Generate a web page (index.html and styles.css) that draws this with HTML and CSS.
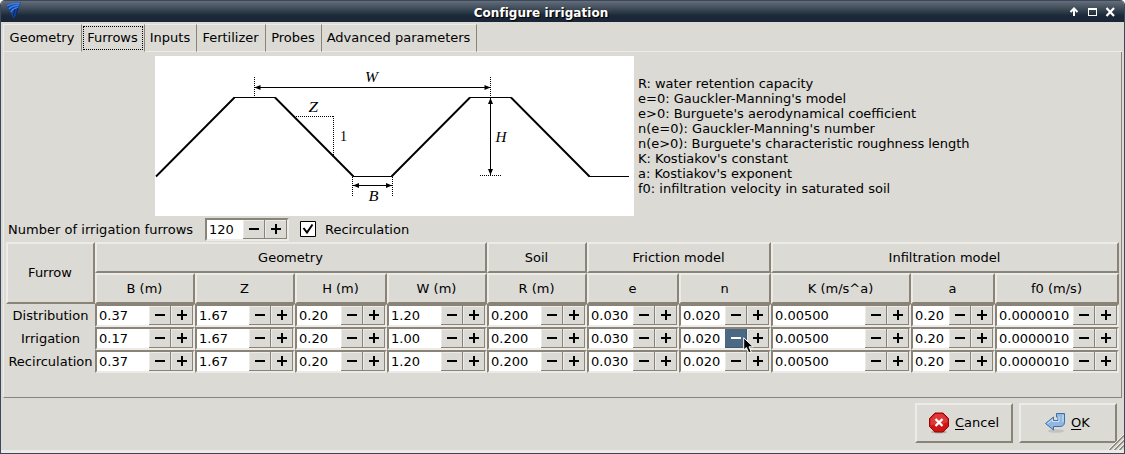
FILE: index.html
```html
<!DOCTYPE html>
<html lang="en">
<head>
<meta charset="utf-8">
<title>Configure irrigation</title>
<link rel="stylesheet" href="styles.css">
</head>
<body>
<svg class="defs" width="0" height="0">
  <symbol id="minus" viewBox="0 0 22 19"><path d="M6 8h10v2H6z"/></symbol>
  <symbol id="plus" viewBox="0 0 22 19"><path d="M6 8h10v2H6zM10 4h2v10h-2z"/></symbol>
</svg>
<div class="window">
  <header class="titlebar">
    <svg class="app-icon" width="17" height="18" viewBox="0 0 17 18">
      <path d="M0 3 6 1 15 0 12 7 10 13 8 16 6 15 5 11 2 7z" fill="#16459a"/>
      <path d="M1 4C5 1 10 2 14 1M3 7C6 3 10 4 13 3M5 10C7 6 9 7 12 5" stroke="#3f7fe6" stroke-width="1.5" fill="none"/>
      <path d="M7 15 9 7M10 13 12 6" stroke="#0b2461" fill="none"/>
    </svg>
    <h1 class="title">Configure irrigation</h1>
    <svg class="controls" width="48" height="14" viewBox="0 0 48 14">
      <path d="M6 11V4M2.500 7 6 3.500 9.500 7" stroke="#fff" stroke-width="2" fill="none"/>
      <path d="M20 3h9v8h-9zM21 5v5h7V5z" fill="#fff" fill-rule="evenodd"/>
      <path d="M38.500 3 46 11M46 3 38.500 11" stroke="#fff" stroke-width="2.200"/>
    </svg>
  </header>
  <nav class="tabs">
    <span class="tab t1">Geometry</span><span class="tab t2 active"><span class="focus">Furrows</span></span><span class="tab t3">Inputs</span><span class="tab t4">Fertilizer</span><span class="tab t5">Probes</span><span class="tab t6">Advanced parameters</span><span class="tab-rest"></span>
  </nav>
  <main class="pane">
    <section class="intro">
      <svg class="diagram" width="479" height="160" viewBox="155 56 479 160">
        <g stroke="#000" fill="none">
          <path stroke-width="1.900" d="M156 176.500 234.500 97.500M275 97.500 353.500 176.500M391.500 176.500 470 97.500M511 97.500 589.500 176.500"/>
          <path d="M234 97.500H275M353 176.500H392M470 97.500H511M589 176.500H629M255 87.500H490M353 185.500H392M490.500 98V175"/>
          <path stroke-dasharray="1 1" d="M254.500 77V97M490.500 77V97M480 175.500H502M294 116.500H334M333.500 116V156M352.500 177V196M392.500 177V196"/>
        </g>
        <path d="M254.500 87.500l6-2.500v5zM490.500 87.500l-6-2.500v5zM353 185.500l6-2.500v5zM392 185.500l-6-2.500v5zM490.500 98l-2.500 6h5zM490.500 175l-2.500-6h5z"/>
        <g class="math">
          <text x="365" y="82" textLength="13" lengthAdjust="spacingAndGlyphs">W</text>
          <text x="308.500" y="112" textLength="9.500" lengthAdjust="spacingAndGlyphs">Z</text>
          <text x="495.500" y="142" textLength="11" lengthAdjust="spacingAndGlyphs">H</text>
          <text x="368.500" y="201" textLength="10" lengthAdjust="spacingAndGlyphs">B</text>
          <text x="340" y="141" class="upright">1</text>
        </g>
      </svg>
      <div class="legend">
        <p class="snug">R: water retention capacity</p>
        <p>e=0: Gauckler-Manning's model</p>
        <p>e&gt;0: Burguete's aerodynamical coefficient</p>
        <p>n(e=0): Gauckler-Manning's number</p>
        <p class="snug">n(e&gt;0): Burguete's characteristic roughness length</p>
        <p>K: Kostiakov's constant</p>
        <p>a: Kostiakov's exponent</p>
        <p>f0: infiltration velocity in saturated soil</p>
      </div>
    </section>
    <section class="count">
      <span class="count-label">Number of irrigation furrows</span>
      <div class="spin count-spin"><span class="val">120</span><svg class="btn"><use href="#minus"/></svg><svg class="btn"><use href="#plus"/></svg></div>
      <svg class="check" width="16" height="16" viewBox="0 0 16 16"><path d="M.5.5h15v15H.5z" fill="#fff" stroke="#000"/><path d="M3.500 7 7 11.500 12.500 3.500" fill="none" stroke="#000" stroke-width="2"/></svg>
      <span>Recirculation</span>
    </section>
    <section class="grid">
      <div class="head furrow">Furrow</div>
      <div class="head span4">Geometry</div><div class="head">Soil</div><div class="head span2">Friction model</div><div class="head span3">Infiltration model</div>
      <div class="head">B (m)</div><div class="head">Z</div><div class="head">H (m)</div><div class="head">W (m)</div><div class="head">R (m)</div><div class="head">e</div><div class="head">n</div><div class="head">K (m/s^a)</div><div class="head">a</div><div class="head">f0 (m/s)</div>

      <div class="name">Distribution</div>
      <div class="spin"><span class="val">0.37</span><svg class="btn"><use href="#minus"/></svg><svg class="btn"><use href="#plus"/></svg></div>
      <div class="spin"><span class="val">1.67</span><svg class="btn"><use href="#minus"/></svg><svg class="btn"><use href="#plus"/></svg></div>
      <div class="spin"><span class="val">0.20</span><svg class="btn"><use href="#minus"/></svg><svg class="btn"><use href="#plus"/></svg></div>
      <div class="spin"><span class="val">1.20</span><svg class="btn"><use href="#minus"/></svg><svg class="btn"><use href="#plus"/></svg></div>
      <div class="spin"><span class="val">0.200</span><svg class="btn"><use href="#minus"/></svg><svg class="btn"><use href="#plus"/></svg></div>
      <div class="spin"><span class="val">0.030</span><svg class="btn"><use href="#minus"/></svg><svg class="btn"><use href="#plus"/></svg></div>
      <div class="spin"><span class="val">0.020</span><svg class="btn"><use href="#minus"/></svg><svg class="btn"><use href="#plus"/></svg></div>
      <div class="spin"><span class="val">0.00500</span><svg class="btn"><use href="#minus"/></svg><svg class="btn"><use href="#plus"/></svg></div>
      <div class="spin"><span class="val">0.20</span><svg class="btn"><use href="#minus"/></svg><svg class="btn"><use href="#plus"/></svg></div>
      <div class="spin"><span class="val">0.0000010</span><svg class="btn"><use href="#minus"/></svg><svg class="btn"><use href="#plus"/></svg></div>

      <div class="name">Irrigation</div>
      <div class="spin"><span class="val">0.17</span><svg class="btn"><use href="#minus"/></svg><svg class="btn"><use href="#plus"/></svg></div>
      <div class="spin"><span class="val">1.67</span><svg class="btn"><use href="#minus"/></svg><svg class="btn"><use href="#plus"/></svg></div>
      <div class="spin"><span class="val">0.20</span><svg class="btn"><use href="#minus"/></svg><svg class="btn"><use href="#plus"/></svg></div>
      <div class="spin"><span class="val">1.00</span><svg class="btn"><use href="#minus"/></svg><svg class="btn"><use href="#plus"/></svg></div>
      <div class="spin"><span class="val">0.200</span><svg class="btn"><use href="#minus"/></svg><svg class="btn"><use href="#plus"/></svg></div>
      <div class="spin"><span class="val">0.030</span><svg class="btn"><use href="#minus"/></svg><svg class="btn"><use href="#plus"/></svg></div>
      <div class="spin"><span class="val">0.020</span><svg class="btn hover"><use href="#minus"/></svg><svg class="btn"><use href="#plus"/></svg>
        <svg class="cursor" width="12" height="18" viewBox="0 0 12 18"><path d="M.7.8V13l2.700-2.500 2.300 5.300 2.500-1-2.200-5h4.200z" stroke="#fff" stroke-width="1"/></svg></div>
      <div class="spin"><span class="val">0.00500</span><svg class="btn"><use href="#minus"/></svg><svg class="btn"><use href="#plus"/></svg></div>
      <div class="spin"><span class="val">0.20</span><svg class="btn"><use href="#minus"/></svg><svg class="btn"><use href="#plus"/></svg></div>
      <div class="spin"><span class="val">0.0000010</span><svg class="btn"><use href="#minus"/></svg><svg class="btn"><use href="#plus"/></svg></div>

      <div class="name">Recirculation</div>
      <div class="spin"><span class="val">0.37</span><svg class="btn"><use href="#minus"/></svg><svg class="btn"><use href="#plus"/></svg></div>
      <div class="spin"><span class="val">1.67</span><svg class="btn"><use href="#minus"/></svg><svg class="btn"><use href="#plus"/></svg></div>
      <div class="spin"><span class="val">0.20</span><svg class="btn"><use href="#minus"/></svg><svg class="btn"><use href="#plus"/></svg></div>
      <div class="spin"><span class="val">1.20</span><svg class="btn"><use href="#minus"/></svg><svg class="btn"><use href="#plus"/></svg></div>
      <div class="spin"><span class="val">0.200</span><svg class="btn"><use href="#minus"/></svg><svg class="btn"><use href="#plus"/></svg></div>
      <div class="spin"><span class="val">0.030</span><svg class="btn"><use href="#minus"/></svg><svg class="btn"><use href="#plus"/></svg></div>
      <div class="spin"><span class="val">0.020</span><svg class="btn"><use href="#minus"/></svg><svg class="btn"><use href="#plus"/></svg></div>
      <div class="spin"><span class="val">0.00500</span><svg class="btn"><use href="#minus"/></svg><svg class="btn"><use href="#plus"/></svg></div>
      <div class="spin"><span class="val">0.20</span><svg class="btn"><use href="#minus"/></svg><svg class="btn"><use href="#plus"/></svg></div>
      <div class="spin"><span class="val">0.0000010</span><svg class="btn"><use href="#minus"/></svg><svg class="btn"><use href="#plus"/></svg></div>
    </section>
  </main>
  <footer class="actions">
    <div class="action">
      <svg width="22" height="22" viewBox="0 0 22 22">
        <ellipse cx="11" cy="20" rx="8" ry="1.500" fill="#a9a8a3"/>
        <path d="M7 1h8l5.500 5.500v8L15 20H7L1.500 14.500v-8z" fill="#cc1515" stroke="#a00000"/>
        <path d="M7.400 2h7.200l4.900 4.900v3.600c-5 2-12 1-17 3V6.900z" fill="#e65050" opacity=".6"/>
        <path d="M7.500 7 14.500 14M14.500 7 7.500 14" stroke="#fff" stroke-width="2.400"/>
      </svg>
      <span class="cancel-text"><u>C</u>ancel</span>
    </div>
    <div class="action">
      <svg width="22" height="22" viewBox="0 0 22 22">
        <ellipse cx="12" cy="19" rx="8" ry="1.800" fill="#c3c2be"/>
        <path d="M1.500 11.500 9.500 5v3.500h4.500V6.500c0-1-.5-1.500-1.500-1.500V1.500h8v9c0 2.500-2 4-4.500 4H9.500V18z" fill="#8fb7e3" stroke="#3f6ea5"/>
        <path d="M3.500 11.500 8.500 7.500v2h6.500V4.500M19 3v7" fill="none" stroke="#d3e4f6"/>
      </svg>
      <span class="ok-text"><u>O</u>K</span>
    </div>
  </footer>
  <svg class="grip" width="16" height="16" viewBox="0 0 16 16"><path d="M1.500 16 16 1.500M6.500 16 16 6.500M11.500 16 16 11.500" stroke="#8a8478" stroke-width="1.500"/><path d="M0 16 16 0M5 16 16 5M10 16 16 10" stroke="#f2f0ed"/></svg>
</div>
</body>
</html>
```
FILE: styles.css
```css
* { box-sizing: border-box; }
body {
  margin: 0;
  background: #fff;
  font: 13px/15px "DejaVu Sans", sans-serif;
  color: #000;
}
.defs { position: absolute; }
.window {
  position: relative;
  display: flex;
  flex-direction: column;
  width: 1125px;
  height: 454px;
  border: 1px solid #3a475c;
  border-top: 0;
  border-radius: 5px 5px 0 0;
  background: #dbdad5;
  box-shadow: inset 0 -3px #edebe7;
  overflow: hidden;
}
.titlebar {
  display: flex;
  align-items: center;
  height: 22px;
  padding: 0 8px 0 5px;
  border-top: 1px solid #3a475c;
  background: linear-gradient(#656e7a, #354250 45%, #1b2838 70%, #1a2637);
}
.app-icon { flex: none; margin-top: -1px; }
.title {
  flex: 1;
  margin: 3px 0 0;
  padding-right: 9px;
  text-align: center;
  font-size: 12px;
  font-weight: bold;
  letter-spacing: .05px;
  color: #fff;
  text-shadow: 1px 1px 1px #000;
}
.controls { flex: none; margin-top: 1px; }
.tabs {
  display: flex;
  height: 30px;
  padding: 2px 2px 0;
  flex: none;
}
.tab {
  display: flex;
  justify-content: center;
  align-items: center;
  height: 28px;
  padding: 0 1px 2px 0;
  border-top: 1px solid #edebe7;
  border-right: 1px solid #8a8478;
  border-bottom: 1px solid #edebe7;
}
.t1 { width: 79px; border-left: 1px solid #edebe7; }
.t2 { width: 63px; }
.t3 { width: 52px; }
.t4 { width: 69px; }
.t5 { width: 56px; }
.t6 { width: 155px; }
.tab.active { padding: 0; border-bottom-color: transparent; }
.focus { width: 60px; height: 24px; line-height: 22px; border: 1px dotted #000; text-align: center; text-indent: -1px; }
.tab-rest { flex: 1; border-bottom: 1px solid #edebe7; }
.pane {
  height: 346px;
  margin: 0 2px;
  flex: none;
  border-left: 1px solid #edebe7;
  border-right: 1px solid #8a8478;
  border-bottom: 1px solid #8a8478;
}
.intro { display: flex; padding: 4px 0 0 151px; }
.diagram { display: block; background: #fff; flex: none; }
.math { font: italic 14px "Liberation Serif", serif; }
.upright { font-style: normal; }
.legend { padding: 20px 0 0 4px; white-space: nowrap; }
.legend p { margin: 0; }
.legend .snug { letter-spacing: -.055px; }
.count { display: flex; align-items: center; height: 26px; padding: 0 0 0 4px; }
.count-label { width: 197px; white-space: nowrap; letter-spacing: .03px; }
.check { margin: 0 9px 0 11px; }
.grid {
  display: grid;
  margin-left: 2px;
  grid-template-columns: 89px 100px 100px 92px 100px 100px 92px 92px 140px 84px 124px;
  grid-template-rows: 31px 31px 23px 23px 23px;
}
.head {
  display: flex;
  align-items: center;
  justify-content: center;
  padding-right: 1px;
  border: 2px solid;
  border-color: #edebe7 #8a8478 #8a8478 #edebe7;
}
.furrow { grid-row: span 2; padding-bottom: 2px; }
.span4 { grid-column: span 4; }
.span2 { grid-column: span 2; }
.span3 { grid-column: span 3; }
.name { text-align: center; line-height: 23px; white-space: nowrap; }
.spin {
  position: relative;
  display: flex;
  height: 23px;
  border: 2px solid;
  border-color: #8a8478 #edebe7 #edebe7 #8a8478;
}
.count-spin { width: 84px; }
.val { flex: 1; min-width: 0; padding-left: 2px; line-height: 19px; background: #fff; white-space: nowrap; }
.btn {
  display: block;
  flex: none;
  width: 22px;
  height: 19px;
  background: #dbdad5;
  box-shadow: inset -1px -1px #8a8478, inset 1px 1px #edebe7;
}
.hover { background: #4b6983; fill: #fff; box-shadow: inset -1px -1px #3d5a75; }
.cursor { position: absolute; left: 62px; top: 8px; z-index: 1; }
.actions { display: flex; justify-content: flex-end; gap: 6px; padding: 5px 7px 0 0; }
.action {
  display: flex;
  align-items: center;
  width: 98px;
  height: 40px;
  padding-left: 11px;
  border: 2px solid;
  border-color: #edebe7 #8a8478 #8a8478 #edebe7;
}
.action:last-child { padding-left: 23px; }
.action span { margin-left: 5px; padding-bottom: 2px; }
.action u { text-underline-offset: 2px; text-decoration-thickness: 1px; text-decoration-skip-ink: none; }
.grip { position: absolute; right: 0; bottom: 3px; }
```
